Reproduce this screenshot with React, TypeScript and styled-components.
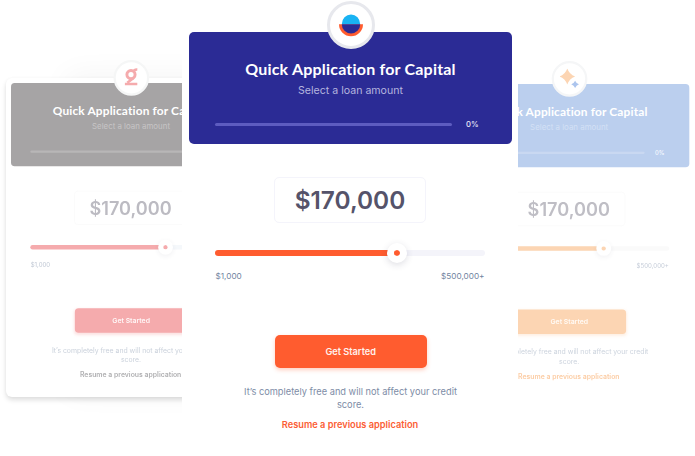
import React from "react";
import styled, { createGlobalStyle, css, ThemeProvider } from "styled-components";

const Global = createGlobalStyle`
  * { box-sizing: border-box; }
  body { margin: 0; background: #fff; font-family: Inter, "Liberation Sans", sans-serif; }
  h2, p { margin: 0; }
`;

interface Brand {
  header: string; title: string; subtitle: string; progress: string; percent: string;
  ring: string; accent: string; rail: string; amount: string; outline: string;
  label: string; note: string; link: string; glow: string; buttonText: string; thumbShadow: string;
}

const indigo: Brand = {
  header: "#2b2b95", title: "#ffffff", subtitle: "#b5b5df", progress: "#5d5cc0", percent: "#e9e9f8",
  ring: "#e7e8ed", accent: "#ff5c2f", rail: "#f4f4fa", amount: "#55536a", outline: "#f4f4fb",
  label: "#7184a0", note: "#7d8ca6", link: "#fb5e35", glow: "rgba(255,92,47,.3)", buttonText: "#fff1ec",
  thumbShadow: "rgba(50,50,80,.16)",
};
const graphite: Brand = {
  header: "#a6a4a5", title: "#ffffff", subtitle: "#c6c4c5", progress: "#b8b6b7", percent: "#ffffff",
  ring: "#f5f6f6", accent: "#f5abad", rail: "#f5f8fb", amount: "#bcbbc2", outline: "#fafafa",
  label: "#c0c8d4", note: "#cbd2dc", link: "#b0b0b2", glow: "rgba(245,171,173,.35)", buttonText: "#fff7f7",
  thumbShadow: "rgba(50,50,80,.07)",
};
const sky: Brand = {
  header: "#bbcfee", title: "#ffffff", subtitle: "#d3e0f5", progress: "#c9d8f1", percent: "#f7faff",
  ring: "#f5f6f7", accent: "#fcd5b3", rail: "#fafafa", amount: "#bfbec5", outline: "#fafafa",
  label: "#c6cdd9", note: "#cdd4de", link: "#fccda5", glow: "rgba(252,213,179,.35)", buttonText: "#fffaf5",
  thumbShadow: "rgba(50,50,80,.07)",
};

const Stage = styled.main`
  display: grid;
  grid-template-columns: 182px 336px 177px;
  width: 695px;
  height: 456px;
  overflow: hidden;
`;

const Pane = styled.section<{ $pad: string }>`
  height: 456px;
  overflow: hidden;
  padding: ${(p) => p.$pad};
  background: #fff;
`;

const Sheet = styled.div`
  width: 250px;
  height: 319px;
  padding: 5px 5px 0;
  border-radius: 6px;
  background: #fff;
  box-shadow: 0 3px 5px rgba(0, 0, 0, 0.13), 0 0 3px rgba(0, 0, 0, 0.03), 60px -4px 30px rgba(0, 0, 0, 0.045);
`;

const Card = styled.article<{ $scale: number; $shift: number }>`
  width: 323px;
  margin-left: ${(p) => p.$shift}px;
  display: flex;
  flex-direction: column;
  align-items: center;
  transform: scale(${(p) => p.$scale});
  transform-origin: 0 0;
`;

const Header = styled.header`
  position: relative;
  width: 100%;
  height: 112px;
  padding: 27px 26px 0 26px;
  border-radius: 5px;
  background: ${(p) => p.theme.header};
  text-align: center;
`;

const Badge = styled.div`
  position: absolute;
  left: 137.5px;
  top: -31px;
  width: 48px;
  height: 48px;
  display: grid;
  place-items: center;
  border: 3px solid ${(p) => p.theme.ring};
  border-radius: 50%;
  background: #fff;
`;

const Title = styled.h2`
  font: 700 16px/19px Lato, sans-serif;
  letter-spacing: 0.2px;
  white-space: nowrap;
  color: ${(p) => p.theme.title};
`;

const Subtitle = styled.p`
  margin-top: 5.5px;
  font-size: 10.6px;
  line-height: 14px;
  color: ${(p) => p.theme.subtitle};
`;

const Progress = styled.div`
  display: flex;
  align-items: center;
  gap: 14px;
  margin-top: 21.5px;
  height: 11px;
  font-size: 7.7px;
  font-weight: 500;
  color: ${(p) => p.theme.percent};
`;

const ProgressRail = styled.div`
  width: 237px;
  height: 3px;
  border-radius: 2px;
  background: ${(p) => p.theme.progress};
`;

const Amount = styled.div`
  margin-top: 33px;
  margin-right: 1px;
  width: 152px;
  height: 46px;
  border: 1px solid ${(p) => p.theme.outline};
  border-radius: 5px;
  text-align: center;
  font-size: 24.4px;
  font-weight: 600;
  line-height: 45px;
  color: ${(p) => p.theme.amount};
`;

const Slider = styled.div`
  display: flex;
  align-items: center;
  margin: 20px 1px 0 0;
  width: 270px;
  height: 20px;
`;

const rail = css`
  height: 6px;
  border-radius: 3px;
`;

const Filled = styled.div`
  ${rail}
  width: 180.5px;
  margin-right: -9px;
  background: ${(p) => p.theme.accent};
`;

const Remaining = styled.div`
  ${rail}
  flex: 1;
  margin-left: -9px;
  background: ${(p) => p.theme.rail};
`;

const Thumb = styled.div`
  z-index: 1;
  width: 20px;
  height: 20px;
  border: 7px solid #fff;
  border-radius: 50%;
  background: ${(p) => p.theme.accent};
  background-clip: padding-box;
  box-shadow: 0 2px 7px ${(p) => p.theme.thumbShadow};
`;

const Range = styled.div`
  display: flex;
  justify-content: space-between;
  margin: 8px 1px 0 0;
  width: 269px;
  font-size: 8.2px;
  line-height: 11px;
  color: ${(p) => p.theme.label};
`;

const Button = styled.button`
  margin-top: 53.4px;
  width: 152px;
  height: 33px;
  margin-left: 1.4px;
  padding: 0 1px 0 0;
  border: 0;
  border-radius: 5px;
  background: ${(p) => p.theme.accent};
  box-shadow: 0 2px 4px ${(p) => p.theme.glow};
  font: 600 9.2px Inter, sans-serif;
  color: ${(p) => p.theme.buttonText};
`;

const Note = styled.p`
  margin-top: 17.8px;
  width: 226px;
  text-align: center;
  font-size: 9.25px;
  line-height: 12.5px;
  color: ${(p) => p.theme.note};
`;

const Resume = styled.a`
  margin-top: 6.6px;
  margin-right: 1px;
  font-size: 9.25px;
  font-weight: 600;
  line-height: 13px;
  white-space: nowrap;
  color: ${(p) => p.theme.link};
`;

const SunLogo = () => (
  <svg width="24" height="24" viewBox="0 0 24 24">
    <path d="M0 11.3h24a12 12 0 0 1-24 0Z" fill="#ff5c2f" />
    <path d="M2.8 11.3a9.2 9.8 0 0 1 18.4 0Z" fill="#19b3f3" />
    <path d="M2.8 11.3a9.2 9.2 0 0 0 18.4 0Z" fill="#2b2b95" />
  </svg>
);

const LoopLogo = () => (
  <svg width="18" height="26" viewBox="0 0 18 26" fill="none" stroke="#f5abad">
    <circle cx="8.5" cy="8.7" r="5.5" strokeWidth="4" />
    <path d="M12.2 4.4Q13.5 1.5 17 1.7" strokeWidth="3.5" />
    <path d="M12 13.2 3.5 19.7" strokeWidth="3.5" />
    <path d="M0 21.4h17" strokeWidth="3.5" />
  </svg>
);

const SparkLogo = () => (
  <svg width="26" height="28" viewBox="0 0 26 28">
    <path d="M10 0Q12.8 8 20.5 10.8Q12.8 13.6 10 21.6Q7.2 13.6-.5 10.8Q7.2 8 10 0Z" fill="#fcd5b3" />
    <path d="M20.5 16.5Q22 20 25.7 21.5Q22 23 20.5 26.5Q19 23 15.3 21.5Q19 20 20.5 16.5Z" fill="#acc5ee" />
  </svg>
);

interface LoanCardProps { brand: Brand; logo: React.ReactNode; scale?: number; shift?: number }

const LoanCard = ({ brand, logo, scale = 1, shift = 0 }: LoanCardProps) => (
  <ThemeProvider theme={brand}>
    <Card $scale={scale} $shift={shift}>
      <Header>
        <Badge>{logo}</Badge>
        <Title>Quick Application for Capital</Title>
        <Subtitle>Select a loan amount</Subtitle>
        <Progress><ProgressRail /><span>0%</span></Progress>
      </Header>
      <Amount>$170,000</Amount>
      <Slider><Filled /><Thumb /><Remaining /></Slider>
      <Range><span>$1,000</span><span>$500,000+</span></Range>
      <Button>Get Started</Button>
      <Note>It’s completely free and will not affect your credit score.</Note>
      <Resume>Resume a previous application</Resume>
    </Card>
  </ThemeProvider>
);

export default function App() {
  return (
    <>
      <Global />
      <Stage>
        <Pane $pad="78px 0 0 6px">
          <Sheet><LoanCard brand={graphite} logo={<LoopLogo />} scale={0.743} /></Sheet>
        </Pane>
        <Pane $pad="32px 0 0 7px">
          <LoanCard brand={indigo} logo={<SunLogo />} />
        </Pane>
        <Pane $pad="84px 0 0">
          <LoanCard brand={sky} logo={<SparkLogo />} scale={0.744} shift={-69.3} />
        </Pane>
      </Stage>
    </>
  );
}
